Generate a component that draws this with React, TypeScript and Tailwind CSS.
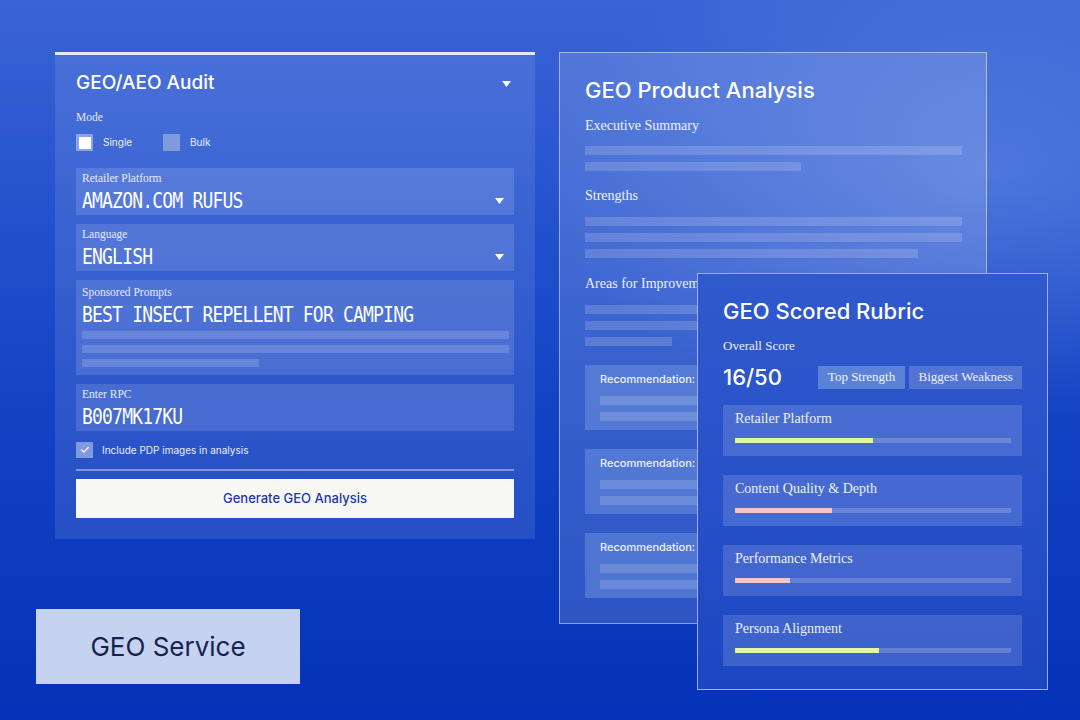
import { Check } from "lucide-react";

const serif = "font-['Liberation_Serif',serif]";
const mono = "font-['DejaVu_Sans_Mono',monospace]";

function Caret() {
  return (
    <svg width="9" height="6" viewBox="0 0 9 6" aria-hidden>
      <path d="M0 0h9L4.5 6z" fill="white" />
    </svg>
  );
}

function MonoText({ children }: { children: string }) {
  return (
    <span
      className={`${mono} inline-block origin-center scale-y-[1.15] text-[18px] leading-[22px] tracking-[-0.8px] text-white`}
    >
      {children}
    </span>
  );
}

function Field({ label, value, caret }: { label: string; value: string; caret?: boolean }) {
  return (
    <div className="flex h-[47px] flex-col justify-center bg-white/[0.13] px-[6px]">
      <span className={`${serif} text-[11.5px] leading-[14px] text-white/85`}>{label}</span>
      <div className="mt-[5px] flex items-center justify-between pr-[4px]">
        <MonoText>{value}</MonoText>
        {caret && <Caret />}
      </div>
    </div>
  );
}

function Bar({ w, h = "h-[9px]" }: { w: string; h?: string }) {
  return <div className={`${h} ${w} bg-white/[0.16]`} />;
}

function Recommendation() {
  return (
    <div className="flex h-[65px] w-[300px] flex-col bg-[#7fa3e4]/40 px-[15px] pt-[7px]">
      <span className="font-['Inter',sans-serif] text-[11px] font-medium leading-[14px] text-white/90">
        Recommendation:
      </span>
      <div className="mt-[10px] flex flex-col gap-[7px]">
        <Bar w="w-full" />
        <Bar w="w-full" />
      </div>
    </div>
  );
}

const rubric = [
  { label: "Retailer Platform", pct: 50, color: "bg-[#e4f59c]" },
  { label: "Content Quality & Depth", pct: 35, color: "bg-[#f1c6c8]" },
  { label: "Performance Metrics", pct: 20, color: "bg-[#f1c6c8]" },
  { label: "Persona Alignment", pct: 52, color: "bg-[#e4f59c]" },
];

export default function App() {
  return (
    <div className="relative h-[720px] w-[1080px] overflow-hidden bg-[radial-gradient(ellipse_at_92%_24%,rgba(140,172,240,0.38),transparent_32%),linear-gradient(180deg,#3a64d6_0%,#2755cf_25%,#1443c4_55%,#0532b8_100%)] font-['Inter',sans-serif]">
      <div className="flex items-start gap-[24px] pl-[55px] pt-[52px]">
        {/* left column */}
        <div className="flex flex-col">
          <div className="w-[480px] border-t-[3px] border-white/85 bg-white/[0.1] px-[21px] pb-[21px]">
            <div className="flex h-[55px] items-center justify-between pr-[3px] pt-[2px]">
              <h1 className="text-[19px] font-medium text-white">GEO/AEO Audit</h1>
              <Caret />
            </div>
            <div className={`${serif} text-[11.5px] leading-[14px] text-white/85`}>Mode</div>
            <div className="mt-[10px] flex items-center gap-[10px] text-[10px] text-white/90">
              <span className="flex h-[17px] w-[17px] items-center justify-center bg-[#8aa5e6]">
                <span className="h-[12px] w-[12px] bg-white" />
              </span>
              <span className="w-[50px]">Single</span>
              <span className="h-[17px] w-[17px] bg-[#7f9be0]" />
              <span>Bulk</span>
            </div>
            <div className="mt-[17px] flex flex-col gap-[9px]">
              <Field label="Retailer Platform" value="AMAZON.COM RUFUS" caret />
              <Field label="Language" value="ENGLISH" caret />
              <div className="flex h-[95px] flex-col bg-white/[0.13] px-[6px] pt-[5px]">
                <span className={`${serif} text-[11.5px] leading-[14px] text-white/85`}>Sponsored Prompts</span>
                <div className="mt-[4px]">
                  <MonoText>BEST INSECT REPELLENT FOR CAMPING</MonoText>
                </div>
                <div className="mt-[4px] flex flex-col gap-[6px]">
                  <Bar w="w-[427px]" h="h-[8px]" />
                  <Bar w="w-[427px]" h="h-[8px]" />
                  <Bar w="w-[177px]" h="h-[8px]" />
                </div>
              </div>
              <Field label="Enter RPC" value="B007MK17KU" />
            </div>
            <div className="mt-[11px] flex items-center gap-[9px] text-[10px] text-white/90">
              <span className="flex h-[16px] w-[17px] items-center justify-center bg-[#7f9be0]">
                <Check className="h-[10px] w-[10px] text-white" strokeWidth={3} />
              </span>
              <span>Include PDP images in analysis</span>
            </div>
            <div className="mt-[11px] h-[2px] bg-white/40" />
            <button
              type="button"
              className="mt-[8px] flex h-[39px] w-full items-center justify-center bg-[#f7f7f3] text-[13px] font-medium text-[#1a3aab]"
            >
              Generate GEO Analysis
            </button>
          </div>
          <div className="-ml-[19px] mt-[70px] flex h-[75px] w-[264px] items-center justify-center bg-[#c5d3f1] text-[26px] text-[#17234f]">
            GEO Service
          </div>
        </div>

        {/* right area */}
        <div className="relative">
          <div className="h-[572px] w-[428px] border border-white/45 bg-white/[0.15] px-[25px] pt-[22px]">
            <h2 className="text-[22px] font-medium leading-[30px] text-white">GEO Product Analysis</h2>
            <div className={`${serif} mt-[10px] text-[14px] text-white/90`}>Executive Summary</div>
            <div className="mt-[10px] flex flex-col gap-[7px]">
              <Bar w="w-[377px]" />
              <Bar w="w-[216px]" />
            </div>
            <div className={`${serif} mt-[14px] text-[14px] text-white/90`}>Strengths</div>
            <div className="mt-[11px] flex flex-col gap-[7px]">
              <Bar w="w-[377px]" />
              <Bar w="w-[377px]" />
              <Bar w="w-[333px]" />
            </div>
            <div className={`${serif} mt-[15px] text-[14px] text-white/90`}>Areas for Improvement</div>
            <div className="mt-[11px] flex flex-col gap-[7px]">
              <Bar w="w-[377px]" />
              <Bar w="w-[377px]" />
              <Bar w="w-[87px]" />
            </div>
            <div className="mt-[19px] flex flex-col gap-[19px]">
              <Recommendation />
              <Recommendation />
              <Recommendation />
            </div>
          </div>

          {/* overlapping rubric card */}
          <div className="absolute left-[138px] top-[221px] h-[417px] w-[351px] border border-white/55 bg-[linear-gradient(180deg,#3059cd_0%,#2650c8_60%,#1c46c1_100%)] px-[25px] pt-[22px]">
            <h2 className="text-[22px] font-medium leading-[30px] text-white">GEO Scored Rubric</h2>
            <div className={`${serif} mt-[10px] text-[13px] text-white/90`}>Overall Score</div>
            <div className="mt-[5px] flex items-center">
              <span className="w-[95px] text-[22px] font-medium text-white">16/50</span>
              <span className={`${serif} flex h-[23px] w-[88px] items-center justify-center bg-[#6d95dc]/70 text-[13px] text-white/90`}>
                Top Strength
              </span>
              <span className={`${serif} ml-[4px] flex h-[23px] w-[113px] items-center justify-center bg-white/[0.18] text-[13px] text-white/90`}>
                Biggest Weakness
              </span>
            </div>
            <div className="mt-[11px] flex flex-col gap-[19px]">
              {rubric.map((r) => (
                <div key={r.label} className="h-[51px] w-[299px] bg-white/[0.14] px-[12px] pt-[6px]">
                  <div className={`${serif} text-[14px] leading-[16px] text-white/90`}>{r.label}</div>
                  <div className="mt-[11px] h-[5px] w-[276px] bg-white/[0.18]">
                    <div className={`h-full ${r.color}`} style={{ width: `${r.pct}%` }} />
                  </div>
                </div>
              ))}
            </div>
          </div>
        </div>
      </div>
    </div>
  );
}
